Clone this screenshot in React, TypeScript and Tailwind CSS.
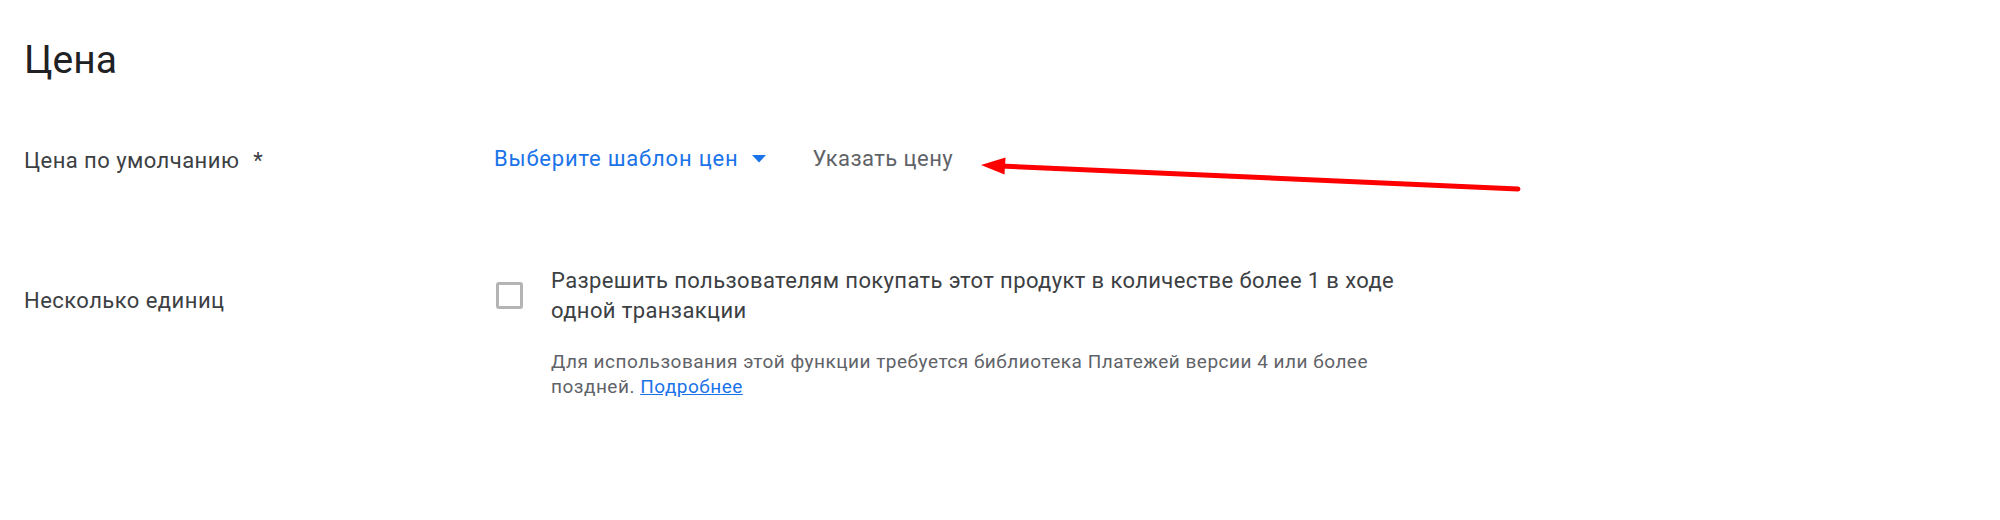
import React from 'react';

function Caret() {
  return (
    <svg className="w-[14px] h-[8px]" viewBox="0 0 14 8">
      <path d="M0 0 L14 0 L7 7.5 Z" fill="#1a73e8" />
    </svg>
  );
}

function AnnotationArrow() {
  return (
    <svg className="absolute left-0 top-0 w-[2000px] h-[520px] pointer-events-none" viewBox="0 0 2000 520">
      <line x1="1518" y1="189" x2="1000" y2="166" stroke="#ff0000" strokeWidth={5} strokeLinecap="round" />
      <polygon points="981,165 1005.5,157.5 1004.5,174.5" fill="#ff0000" />
    </svg>
  );
}

export default function App() {
  return (
    <div className="relative w-[2000px] h-[520px] bg-white font-['Roboto','Liberation_Sans',sans-serif] pl-6 pt-9">
      {/* Section title */}
      <h1 className="text-[39px] leading-[48px] text-[#202124] font-normal">Цена</h1>

      {/* Default price row */}
      <div className="flex items-center mt-[62px]">
        <div className="w-[470px] shrink-0 text-[22px] leading-[30px] tracking-[0.45px] text-[#3c4043]">
          Цена по умолчанию <span className="ml-2">*</span>
        </div>
        <div className="flex items-center">
          <button className="flex items-center gap-[14px] text-[22px] leading-[30px] tracking-[0.8px] text-[#1a73e8] -mt-[4px]">
            Выберите шаблон цен
            <Caret />
          </button>
          <span className="ml-[46px] text-[22px] leading-[30px] tracking-[0.45px] text-[#5f6368] -mt-[4px]">Указать цену</span>
        </div>
      </div>

      {/* Multiple units row */}
      <div className="flex items-start mt-[90px]">
        <div className="w-[470px] shrink-0 pt-5 text-[22px] leading-[30px] tracking-[0.45px] text-[#3c4043]">
          Несколько единиц
        </div>
        <div className="flex flex-col">
          <div className="flex items-start">
            <span className="mt-[16px] ml-[2px] w-[27px] h-[27px] shrink-0 rounded-[3px] border-[3px] border-[#b4b4b4] bg-white"></span>
            <p className="ml-[28px] w-[870px] text-[22px] leading-[30px] tracking-[0.38px] text-[#3c4043]">
              Разрешить пользователям покупать этот продукт в количестве более 1 в ходе одной транзакции
            </p>
          </div>
          <p className="ml-[57px] mt-[23px] w-[830px] text-[19px] leading-[25px] tracking-[0.5px] text-[#5f6368]">
            Для использования этой функции требуется библиотека Платежей версии 4 или более поздней.{' '}
            <a className="text-[#1a73e8] underline">Подробнее</a>
          </p>
        </div>
      </div>

      <AnnotationArrow />
    </div>
  );
}
